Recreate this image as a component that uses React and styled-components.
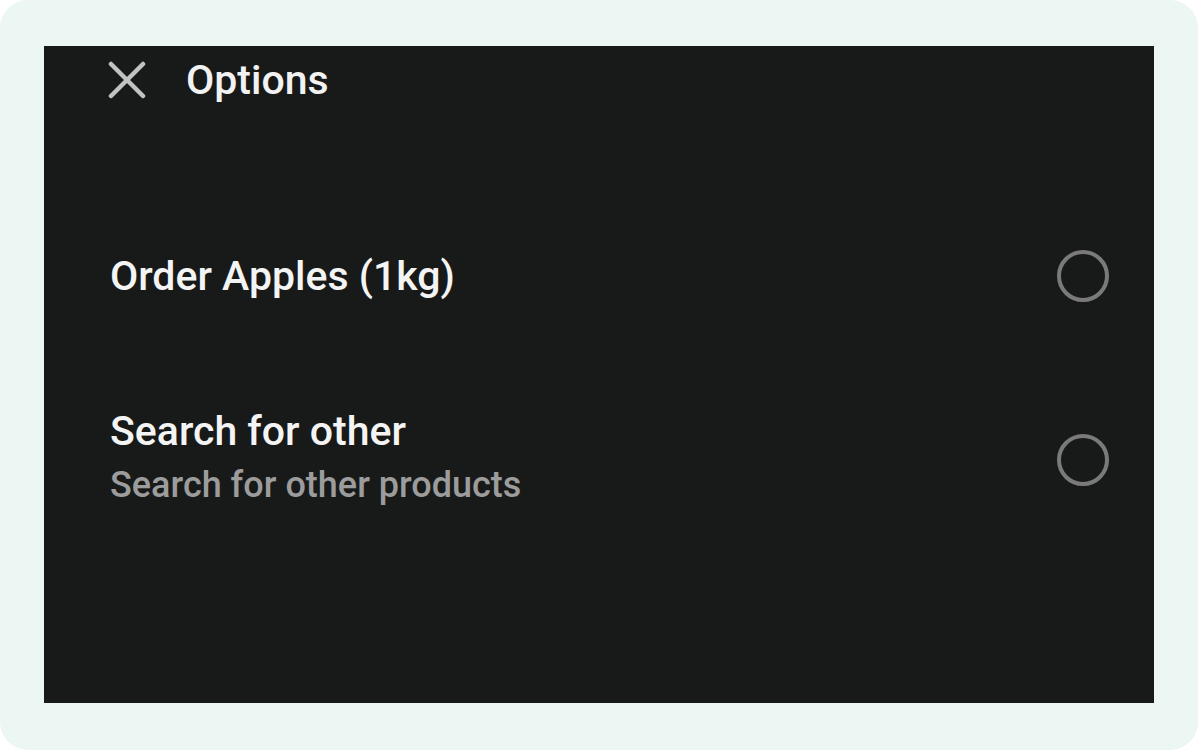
import React from "react";
import styled, { createGlobalStyle } from "styled-components";

const GlobalStyle = createGlobalStyle`
  html, body {
    margin: 0;
    padding: 0;
    background: #ffffff;
  }
  body {
    font-family: Roboto, "Liberation Sans", Arial, sans-serif;
  }
`;

const options = [
  { id: "apples", title: "Order Apples (1kg)" },
  { id: "other", title: "Search for other", subtitle: "Search for other products" },
];

const App = () => {
  return (
    <Frame>
      <GlobalStyle />
      <Panel>
        <Header>
          <CloseButton aria-label="Close">
            <svg width="38" height="38" viewBox="0 0 38 38">
              <path
                d="M3 3 L35 35 M35 3 L3 35"
                stroke="#c2c2c2"
                strokeWidth="4.5"
                strokeLinecap="round"
              />
            </svg>
          </CloseButton>
          <Title>Options</Title>
        </Header>

        <List>
          {options.map((o) => (
            <Row key={o.id}>
              <Texts>
                <RowTitle>{o.title}</RowTitle>
                {o.subtitle && <RowSub>{o.subtitle}</RowSub>}
              </Texts>
              <Radio />
            </Row>
          ))}
        </List>
      </Panel>
    </Frame>
  );
};

const Frame = styled.div`
  width: 1198px;
  height: 750px;
  box-sizing: border-box;
  background: #ecf6f3;
  border-radius: 28px;
  padding: 46px 44px 47px 44px;
  display: flex;
`;

const Panel = styled.div`
  flex: 1;
  background: #181a19;
  display: flex;
  flex-direction: column;
  padding: 0 45px 0 64px;
`;

const Header = styled.div`
  height: 68px;
  display: flex;
  align-items: center;
  gap: 40px;
`;

const CloseButton = styled.div`
  width: 38px;
  height: 38px;
  display: flex;
  align-items: center;
  justify-content: center;
`;

const Title = styled.div`
  color: #f2f2f2;
  font-size: 41px;
  font-weight: 500;
`;

const List = styled.div`
  margin-top: 102px;
  display: flex;
  flex-direction: column;
  gap: 64px;
  padding-left: 2px;
`;

const Row = styled.div`
  height: 120px;
  display: flex;
  align-items: center;
  justify-content: space-between;
`;

const Texts = styled.div`
  display: flex;
  flex-direction: column;
`;

const RowTitle = styled.div`
  color: #f4f4f4;
  font-size: 41px;
  font-weight: 500;
  line-height: 50px;
`;

const RowSub = styled.div`
  color: #9c9c9c;
  font-size: 36px;
  font-weight: 500;
  line-height: 58px;
`;

const Radio = styled.div`
  width: 52px;
  height: 52px;
  box-sizing: border-box;
  border-radius: 50%;
  border: 4px solid #7a7a7a;
`;

export default App;
